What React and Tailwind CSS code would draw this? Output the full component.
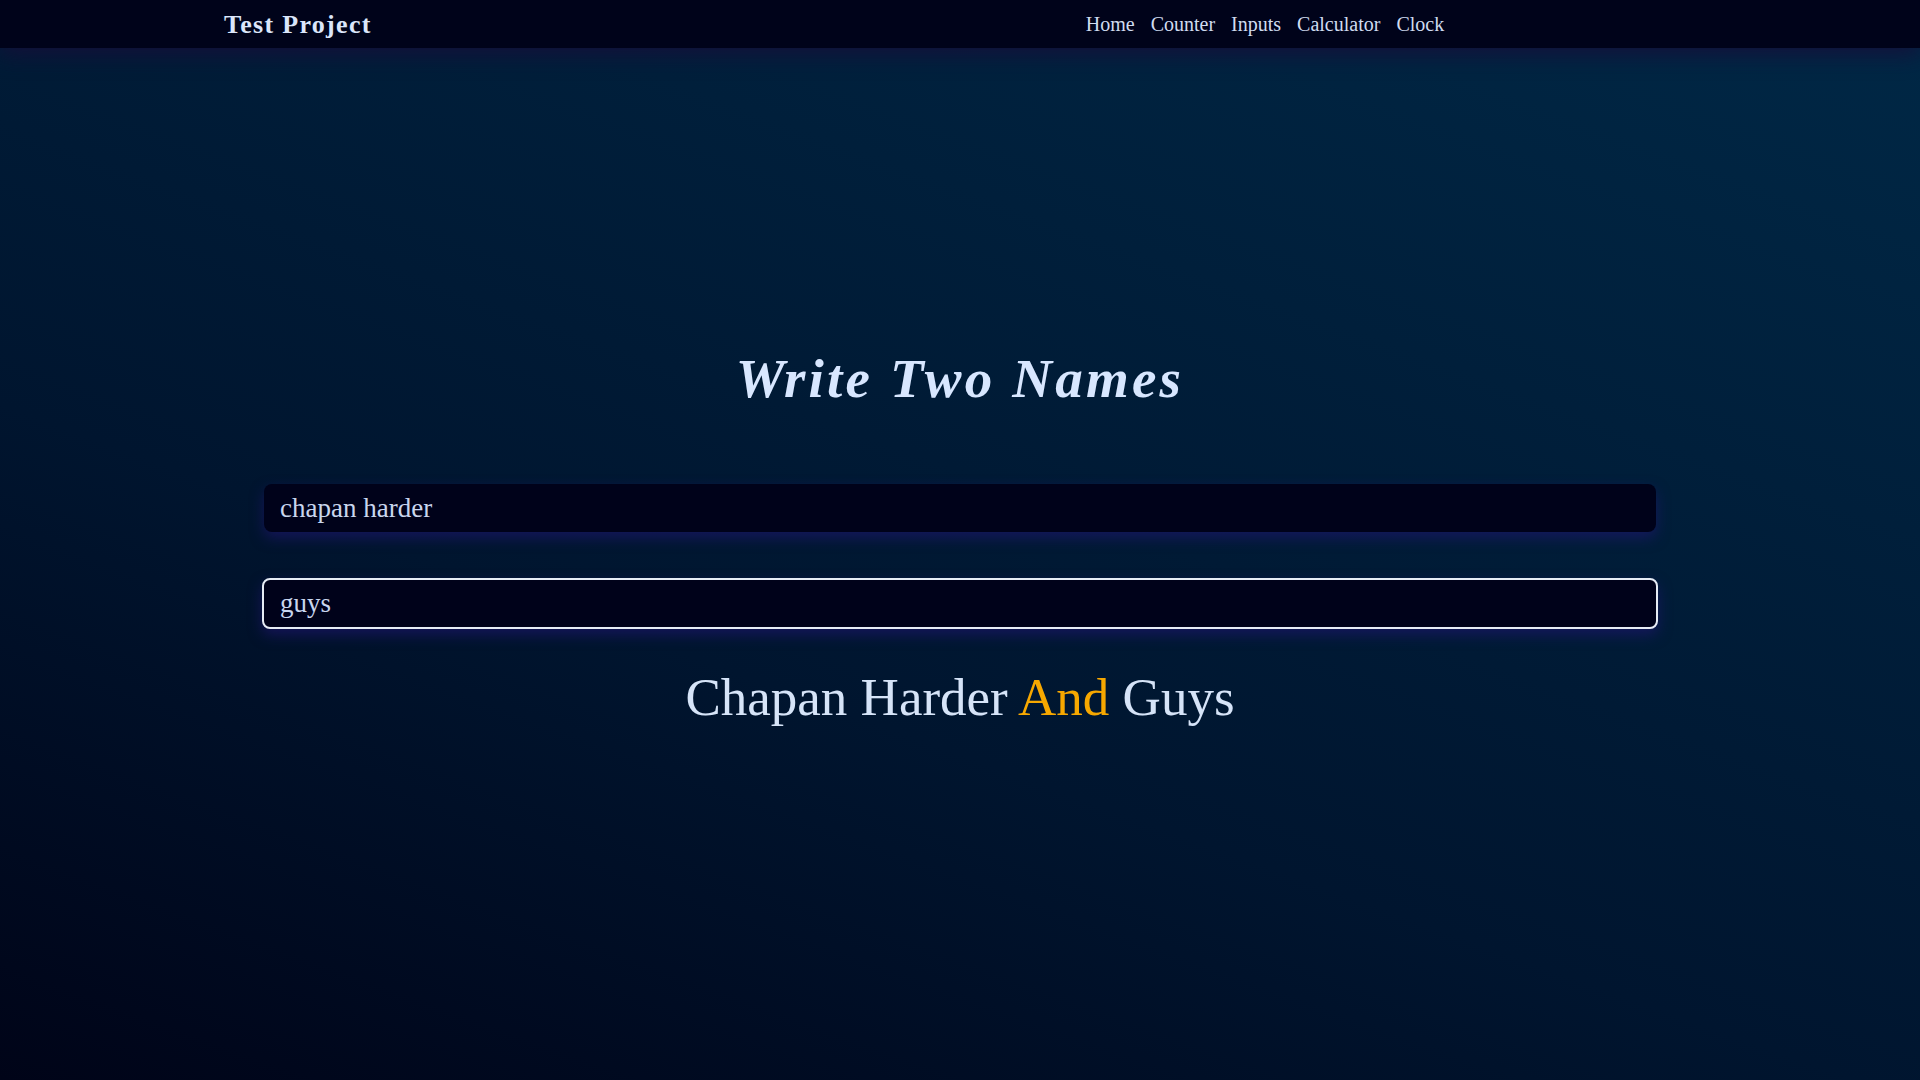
import React, { useState, useRef, useEffect } from 'react';

const serif = { fontFamily: '"Liberation Serif", "Times New Roman", serif' };

function capitalize(str) {
  return str
    .split(' ')
    .map((w) => (w ? w[0].toUpperCase() + w.slice(1) : w))
    .join(' ');
}

export default function App() {
  const [first, setFirst] = useState('chapan harder');
  const [second, setSecond] = useState('guys');
  const secondRef = useRef(null);

  // focus the second field with the caret at the end
  useEffect(() => {
    const el = secondRef.current;
    if (el) {
      el.focus();
      el.setSelectionRange(el.value.length, el.value.length);
    }
  }, []);

  return (
    <div
      className="min-h-screen w-full bg-[linear-gradient(200deg,#002846_0%,#001f3b_30%,#00152f_62%,#000418_100%)] text-[#d6e4fb]"
      style={serif}
    >
      {/* navbar */}
      <nav className="relative z-10 h-12 bg-[#00031a] shadow-[0_6px_22px_rgba(22,14,58,0.9)]">
        <div className="h-full flex items-center pl-[224px]">
          <span className="text-[26px] font-bold tracking-[1.3px] text-[#dbe6fa]">Test Project</span>
          <div className="ml-[714px] flex items-center gap-4 text-[20px] text-[#d0dcf0]">
            <a href="#" className="hover:text-white">Home</a>
            <a href="#" className="hover:text-white">Counter</a>
            <a href="#" className="hover:text-white">Inputs</a>
            <a href="#" className="hover:text-white">Calculator</a>
            <a href="#" className="hover:text-white">Clock</a>
          </div>
        </div>
      </nav>

      {/* main */}
      <main className="flex flex-col items-center pt-[303px] pb-20">
        <h1 className="text-[55px] leading-none font-bold italic tracking-[3.2px] text-[#d8e7ff]">
          Write Two Names
        </h1>

        <input
          value={first}
          onChange={(e) => setFirst(e.target.value)}
          className="mt-[78px] w-[1392px] h-12 rounded-lg bg-[#00021a] px-4 text-[27px] text-[#c9d6ee] outline-none shadow-[0_6px_14px_rgba(30,22,110,0.65)]"
        />

        <input
          ref={secondRef}
          value={second}
          onChange={(e) => setSecond(e.target.value)}
          className="mt-[46px] w-[1396px] h-[51px] rounded-lg border-2 border-[#e6ecf5] bg-[#00021a] px-4 text-[27px] text-[#c9d6ee] outline-none caret-[#c9d6ee] shadow-[0_6px_14px_rgba(30,22,110,0.65)]"
        />

        <p className="mt-[42px] text-[53px] leading-none text-[#d6e4f8]">
          {capitalize(first)} <span className="text-[#f7a800]">And</span> {capitalize(second)}
        </p>
      </main>
    </div>
  );
}
